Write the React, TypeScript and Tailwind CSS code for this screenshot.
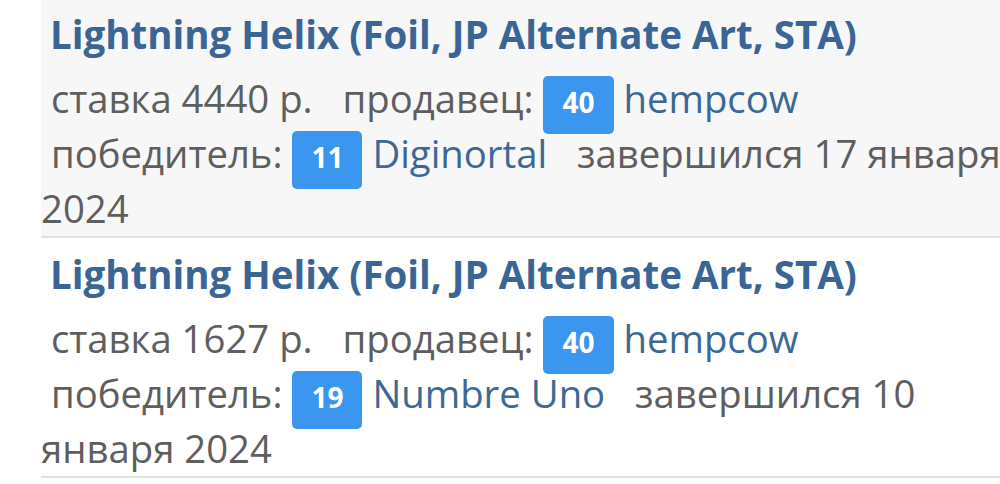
import React from 'react'

type Lot = {
  title: string
  bid: string
  seller: { rating: number; name: string }
  winner: { rating: number; name: string }
  ended: string
  shaded?: boolean
}

const lots: Lot[] = [
  {
    title: 'Lightning Helix (Foil, JP Alternate Art, STA)',
    bid: '4440 р.',
    seller: { rating: 40, name: 'hempcow' },
    winner: { rating: 11, name: 'Diginortal' },
    ended: '17 января 2024',
    shaded: true,
  },
  {
    title: 'Lightning Helix (Foil, JP Alternate Art, STA)',
    bid: '1627 р.',
    seller: { rating: 40, name: 'hempcow' },
    winner: { rating: 19, name: 'Numbre Uno' },
    ended: '10 января 2024',
  },
]

function Rating({ value }: { value: number }) {
  return (
    <span className="inline-block align-baseline -mb-[12px] rounded-[5px] bg-[#3a96ee] px-[19px] pt-[7px] pb-[13px] text-[28px] font-bold leading-[38px] text-white">
      {value}
    </span>
  )
}

function LotRow({ lot }: { lot: Lot }) {
  return (
    <div className={`border-b-2 border-[#e2e2e2] pt-[4px] ${lot.shaded ? 'bg-[#f7f7f7]' : 'bg-white'}`}>
      <div className="pl-[9px] text-[38.5px] font-bold leading-[64px] text-[#3a6594] whitespace-nowrap">
        {lot.title}
      </div>
      <div className="mt-[5px] text-[38.3px] leading-[55px] text-[#5e5e5e]">
        {'\u00a0'}ставка {lot.bid} {'\u00a0'} продавец: <Rating value={lot.seller.rating} />{' '}
        <a className="text-[#3d6896]">{lot.seller.name}</a>
        <br />
        {'\u00a0'}победитель: <Rating value={lot.winner.rating} />{' '}
        <a className="text-[#3d6896]">{lot.winner.name}</a> {'\u00a0'} завершился {lot.ended}
      </div>
    </div>
  )
}

export default function App() {
  return (
    <div className="h-[484px] w-[1000px] overflow-hidden bg-white" style={{ fontFamily: '"Open Sans", "Noto Sans", sans-serif' }}>
      <div className="-mt-[2px] ml-[41px] w-[1000px]">
        {lots.map((lot, i) => (
          <LotRow key={i} lot={lot} />
        ))}
      </div>
    </div>
  )
}
